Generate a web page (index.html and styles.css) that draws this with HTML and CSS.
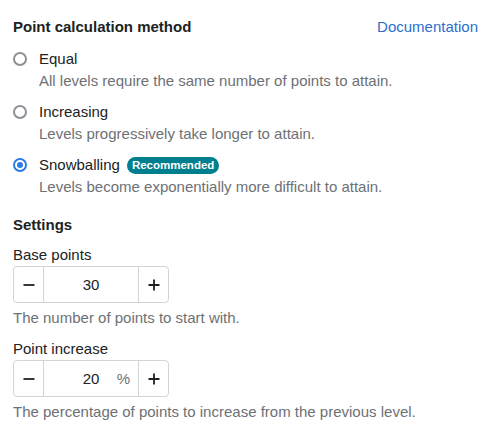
FILE: index.html
```html
<!DOCTYPE html>
<html>
<head>
<meta charset="utf-8">
<link rel="stylesheet" href="styles.css">
</head>
<body>
<div class="panel">
  <div class="header">
    <h2 class="title">Point calculation method</h2>
    <a class="doc-link" href="#">Documentation</a>
  </div>
  <div class="options">
    <label class="option">
      <span class="radio"></span>
      <span class="option-body">
        <span class="option-label">Equal</span>
        <span class="option-desc">All levels require the same number of points to attain.</span>
      </span>
    </label>
    <label class="option">
      <span class="radio"></span>
      <span class="option-body">
        <span class="option-label">Increasing</span>
        <span class="option-desc">Levels progressively take longer to attain.</span>
      </span>
    </label>
    <label class="option">
      <span class="radio checked"></span>
      <span class="option-body">
        <span class="option-label">Snowballing <span class="badge">Recommended</span></span>
        <span class="option-desc">Levels become exponentially more difficult to attain.</span>
      </span>
    </label>
  </div>

  <h3 class="section-title">Settings</h3>

  <div class="field">
    <div class="field-label">Base points</div>
    <div class="stepper">
      <button class="step-btn" aria-label="Decrease">
        <svg width="14" height="14" viewBox="0 0 14 14"><path d="M1.5 7h11" stroke="#202223" stroke-width="1.8"/></svg>
      </button>
      <div class="step-value"><span class="num">30</span></div>
      <button class="step-btn" aria-label="Increase">
        <svg width="14" height="14" viewBox="0 0 14 14"><path d="M1.5 7h11M7 1.5v11" stroke="#202223" stroke-width="1.8"/></svg>
      </button>
    </div>
    <div class="help">The number of points to start with.</div>
  </div>

  <div class="field">
    <div class="field-label">Point increase</div>
    <div class="stepper">
      <button class="step-btn" aria-label="Decrease">
        <svg width="14" height="14" viewBox="0 0 14 14"><path d="M1.5 7h11" stroke="#202223" stroke-width="1.8"/></svg>
      </button>
      <div class="step-value suffixed"><span class="num">20</span><span class="suffix">%</span></div>
      <button class="step-btn" aria-label="Increase">
        <svg width="14" height="14" viewBox="0 0 14 14"><path d="M1.5 7h11M7 1.5v11" stroke="#202223" stroke-width="1.8"/></svg>
      </button>
    </div>
    <div class="help">The percentage of points to increase from the previous level.</div>
  </div>
</div>
</body>
</html>
```

FILE: styles.css
```css
* { box-sizing: border-box; }
html, body { margin: 0; padding: 0; background: #ffffff; }
body {
  font-family: "Liberation Sans", Arial, sans-serif;
  font-size: 15px;
  color: #202223;
}
.panel {
  padding: 15px 12px 0 13px;
}
.header {
  display: flex;
  justify-content: space-between;
  align-items: center;
  height: 22px;
}
.title {
  margin: 0;
  font-size: 15px;
  font-weight: 700;
  color: #202223;
}
.doc-link {
  color: #2c6ecb;
  text-decoration: none;
  font-size: 15px;
}
.options {
  margin-top: 11px;
  display: flex;
  flex-direction: column;
  gap: 9px;
}
.option {
  display: flex;
  align-items: flex-start;
  gap: 12px;
}
.radio {
  flex: none;
  width: 14px;
  height: 14px;
  border-radius: 50%;
  border: 2px solid #8c9196;
  margin-top: 4px;
  display: flex;
  align-items: center;
  justify-content: center;
}
.radio.checked {
  border-color: #2c7be5;
}
.radio.checked::after {
  content: "";
  width: 6px;
  height: 6px;
  border-radius: 50%;
  background: #2c7be5;
}
.option-body {
  display: flex;
  flex-direction: column;
}
.option-label {
  line-height: 22px;
  display: flex;
  align-items: center;
  gap: 7px;
  color: #202223;
}
.option-desc {
  line-height: 22px;
  color: #6d7175;
}
.badge {
  display: inline-block;
  background: #00808f;
  color: #ffffff;
  font-size: 11.5px;
  font-weight: 700;
  line-height: 17px;
  padding: 0 5px;
  border-radius: 9px;
}
.section-title {
  margin: 16px 0 0 0;
  font-size: 15px;
  font-weight: 700;
  line-height: 22px;
  color: #202223;
}
.field {
  margin-top: 8px;
}
.field + .field {
  margin-top: 9px;
}
.field-label {
  line-height: 22px;
  color: #202223;
}
.stepper {
  display: flex;
  width: 156px;
  height: 37px;
  border: 1px solid #d2d5d8;
  border-radius: 4px;
}
.step-btn {
  flex: none;
  width: 29px;
  border: 0;
  background: transparent;
  padding: 0;
  display: flex;
  align-items: center;
  justify-content: center;
}
.step-value {
  flex: 1;
  border-left: 1px solid #d2d5d8;
  border-right: 1px solid #d2d5d8;
  display: flex;
  align-items: center;
  justify-content: center;
  position: relative;
  color: #202223;
}
.suffix {
  position: absolute;
  right: 8px;
  color: #6d7175;
}
.help {
  margin-top: 4px;
  line-height: 22px;
  color: #6d7175;
}
```
